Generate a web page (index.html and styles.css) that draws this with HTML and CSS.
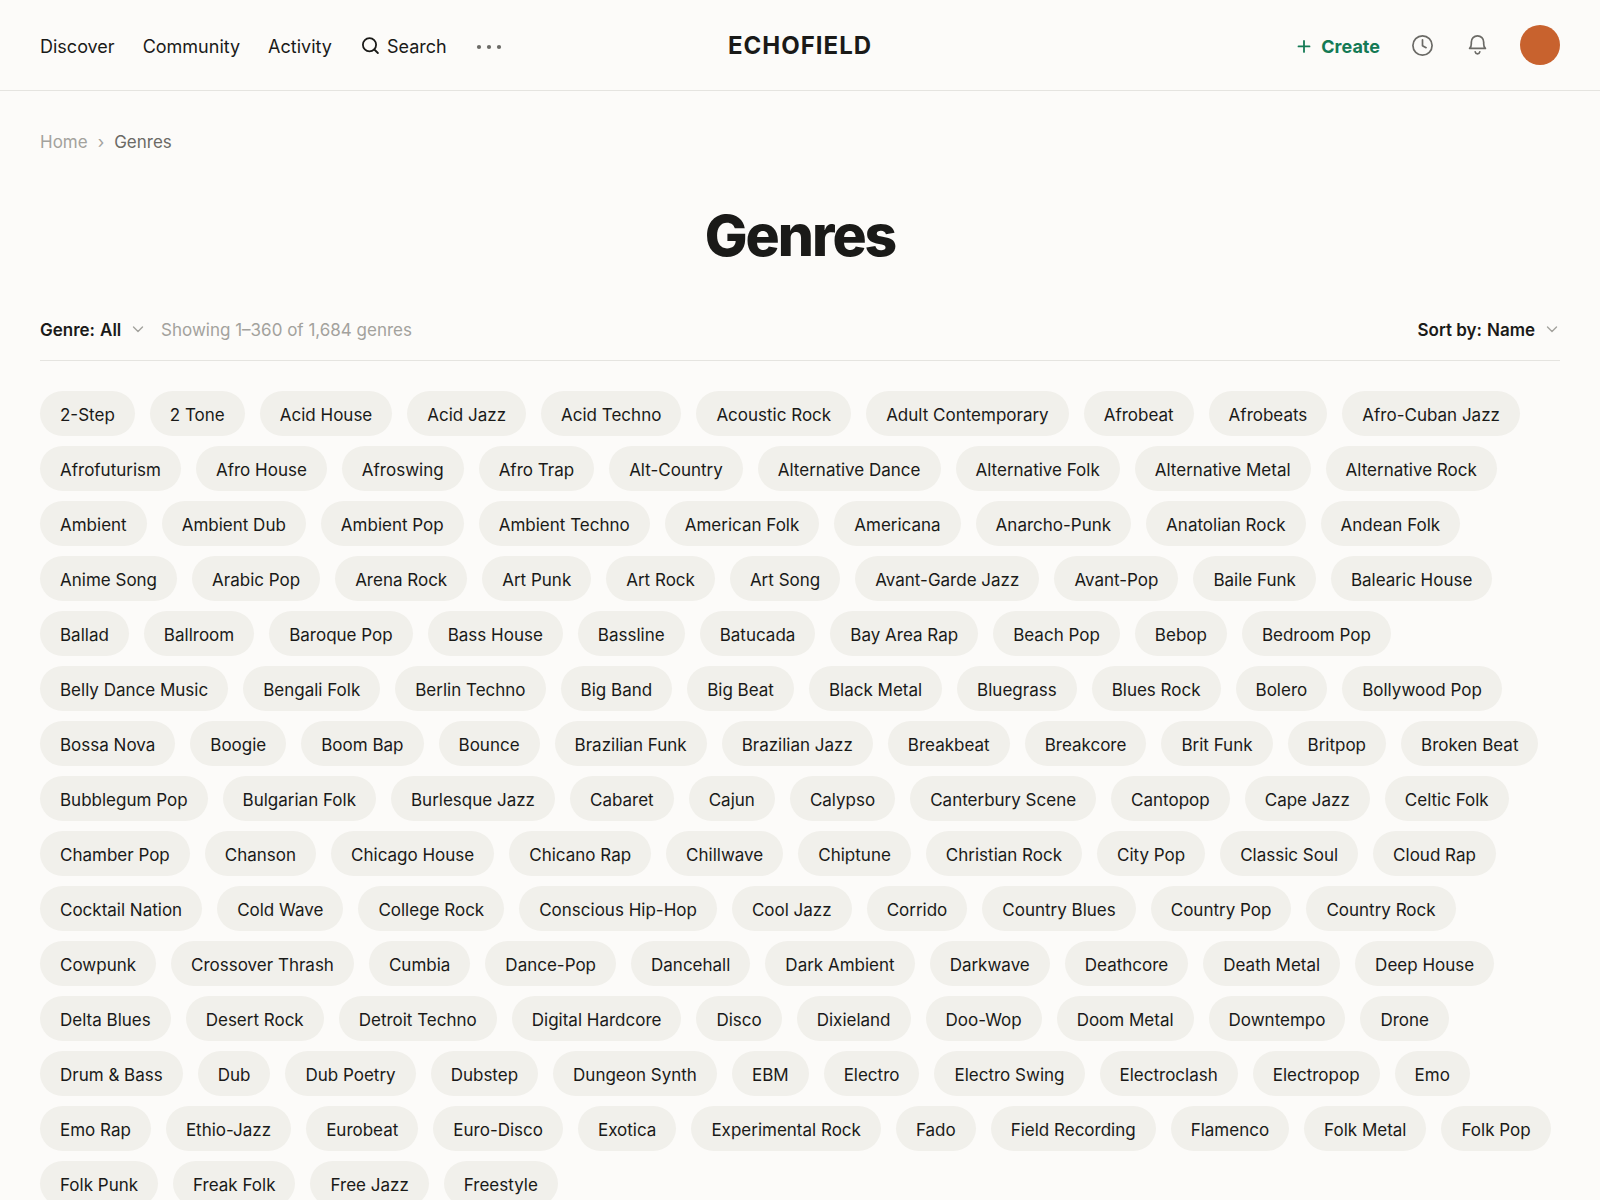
FILE: index.html
```html
<!DOCTYPE html>
<html lang="en">
<head>
    <meta charset="UTF-8">
    <meta name="viewport" content="width=device-width, initial-scale=1.0">
    <title>Genres - Echofield</title>
    <link rel="stylesheet" href="styles.css">
</head>
<body>
    <header class="header">
        <nav class="nav">
            <a href="#">Discover</a>
            <a href="#">Community</a>
            <a href="#">Activity</a>
            <button class="search">
                <svg width="20" height="20" viewBox="0 0 20 20" fill="none" stroke="currentColor" stroke-width="1.8" stroke-linecap="round">
                    <circle cx="9.5" cy="7.7" r="6.6"/>
                    <path d="M14.3 12.5l3.6 3.5"/>
                </svg>
                Search
            </button>
            <button class="more" aria-label="More">
                <svg width="28" height="6" viewBox="0 0 28 6" fill="currentColor">
                    <circle cx="4" cy="3" r="2.1"/>
                    <circle cx="14" cy="3" r="2.1"/>
                    <circle cx="24" cy="3" r="2.1"/>
                </svg>
            </button>
        </nav>
        <a class="logo" href="#">ECHOFIELD</a>
        <div class="actions">
            <button class="create">
                <svg width="14" height="14" viewBox="0 0 14 14" fill="none" stroke="currentColor" stroke-width="1.8" stroke-linecap="round">
                    <path d="M7 0.9v11M1.5 6.4h11"/>
                </svg>
                Create
            </button>
            <button class="icon" aria-label="History">
                <svg width="25" height="25" viewBox="0 0 25 25" fill="none" stroke="currentColor" stroke-width="1.7" stroke-linecap="round" stroke-linejoin="round">
                    <circle cx="12.5" cy="12.5" r="9.6"/>
                    <path d="M12.5 6.8v5.9l3.6 2"/>
                </svg>
            </button>
            <button class="icon" aria-label="Notifications">
                <svg width="25" height="25" viewBox="0 0 25 25" fill="none" stroke="currentColor" stroke-width="1.7" stroke-linecap="round" stroke-linejoin="round">
                    <path d="M4.6 15.4h15.8c-1.2-1.1-1.7-2.6-1.7-4.5V9.3c0-3.700-2.700-6.400-6.200-6.400s-6.200 2.700-6.200 6.400v1.600c0 1.900-.5 3.400-1.700 4.500z"/>
                    <path d="M10.2 18.9c.3 1.3 1.2 2 2.3 2s2-.7 2.3-2"/>
                </svg>
            </button>
            <button class="avatar" aria-label="Account"></button>
        </div>
    </header>

    <main class="content">
        <nav class="breadcrumb" aria-label="Breadcrumb">
            <a href="#">Home</a>
            <span class="separator">›</span>
            <span class="current">Genres</span>
        </nav>

        <h1>Genres</h1>

        <div class="toolbar">
            <div class="dropdown">
                <label for="genre">Genre:</label>
                <select id="genre">
                    <option>All</option>
                </select>
                <svg width="16" height="16" viewBox="0 0 16 16" fill="none" stroke="currentColor" stroke-width="1.4" stroke-linecap="round" stroke-linejoin="round">
                    <path d="M3.5 5L8 9.5L12.5 5"/>
                </svg>
            </div>
            <span class="count">Showing 1–360 of 1,684 genres</span>
            <div class="dropdown sort">
                <label for="sort">Sort by:</label>
                <select id="sort">
                    <option>Name</option>
                </select>
                <svg width="16" height="16" viewBox="0 0 16 16" fill="none" stroke="currentColor" stroke-width="1.4" stroke-linecap="round" stroke-linejoin="round">
                    <path d="M3.5 5L8 9.5L12.5 5"/>
                </svg>
            </div>
        </div>

        <div class="genres">
            <a href="#">2-Step</a>
            <a href="#">2 Tone</a>
            <a href="#">Acid House</a>
            <a href="#">Acid Jazz</a>
            <a href="#">Acid Techno</a>
            <a href="#">Acoustic Rock</a>
            <a href="#">Adult Contemporary</a>
            <a href="#">Afrobeat</a>
            <a href="#">Afrobeats</a>
            <a href="#">Afro-Cuban Jazz</a>
            <a href="#">Afrofuturism</a>
            <a href="#">Afro House</a>
            <a href="#">Afroswing</a>
            <a href="#">Afro Trap</a>
            <a href="#">Alt-Country</a>
            <a href="#">Alternative Dance</a>
            <a href="#">Alternative Folk</a>
            <a href="#">Alternative Metal</a>
            <a href="#">Alternative Rock</a>
            <a href="#">Ambient</a>
            <a href="#">Ambient Dub</a>
            <a href="#">Ambient Pop</a>
            <a href="#">Ambient Techno</a>
            <a href="#">American Folk</a>
            <a href="#">Americana</a>
            <a href="#">Anarcho-Punk</a>
            <a href="#">Anatolian Rock</a>
            <a href="#">Andean Folk</a>
            <a href="#">Anime Song</a>
            <a href="#">Arabic Pop</a>
            <a href="#">Arena Rock</a>
            <a href="#">Art Punk</a>
            <a href="#">Art Rock</a>
            <a href="#">Art Song</a>
            <a href="#">Avant-Garde Jazz</a>
            <a href="#">Avant-Pop</a>
            <a href="#">Baile Funk</a>
            <a href="#">Balearic House</a>
            <a href="#">Ballad</a>
            <a href="#">Ballroom</a>
            <a href="#">Baroque Pop</a>
            <a href="#">Bass House</a>
            <a href="#">Bassline</a>
            <a href="#">Batucada</a>
            <a href="#">Bay Area Rap</a>
            <a href="#">Beach Pop</a>
            <a href="#">Bebop</a>
            <a href="#">Bedroom Pop</a>
            <a href="#">Belly Dance Music</a>
            <a href="#">Bengali Folk</a>
            <a href="#">Berlin Techno</a>
            <a href="#">Big Band</a>
            <a href="#">Big Beat</a>
            <a href="#">Black Metal</a>
            <a href="#">Bluegrass</a>
            <a href="#">Blues Rock</a>
            <a href="#">Bolero</a>
            <a href="#">Bollywood Pop</a>
            <a href="#">Bossa Nova</a>
            <a href="#">Boogie</a>
            <a href="#">Boom Bap</a>
            <a href="#">Bounce</a>
            <a href="#">Brazilian Funk</a>
            <a href="#">Brazilian Jazz</a>
            <a href="#">Breakbeat</a>
            <a href="#">Breakcore</a>
            <a href="#">Brit Funk</a>
            <a href="#">Britpop</a>
            <a href="#">Broken Beat</a>
            <a href="#">Bubblegum Pop</a>
            <a href="#">Bulgarian Folk</a>
            <a href="#">Burlesque Jazz</a>
            <a href="#">Cabaret</a>
            <a href="#">Cajun</a>
            <a href="#">Calypso</a>
            <a href="#">Canterbury Scene</a>
            <a href="#">Cantopop</a>
            <a href="#">Cape Jazz</a>
            <a href="#">Celtic Folk</a>
            <a href="#">Chamber Pop</a>
            <a href="#">Chanson</a>
            <a href="#">Chicago House</a>
            <a href="#">Chicano Rap</a>
            <a href="#">Chillwave</a>
            <a href="#">Chiptune</a>
            <a href="#">Christian Rock</a>
            <a href="#">City Pop</a>
            <a href="#">Classic Soul</a>
            <a href="#">Cloud Rap</a>
            <a href="#">Cocktail Nation</a>
            <a href="#">Cold Wave</a>
            <a href="#">College Rock</a>
            <a href="#">Conscious Hip-Hop</a>
            <a href="#">Cool Jazz</a>
            <a href="#">Corrido</a>
            <a href="#">Country Blues</a>
            <a href="#">Country Pop</a>
            <a href="#">Country Rock</a>
            <a href="#">Cowpunk</a>
            <a href="#">Crossover Thrash</a>
            <a href="#">Cumbia</a>
            <a href="#">Dance-Pop</a>
            <a href="#">Dancehall</a>
            <a href="#">Dark Ambient</a>
            <a href="#">Darkwave</a>
            <a href="#">Deathcore</a>
            <a href="#">Death Metal</a>
            <a href="#">Deep House</a>
            <a href="#">Delta Blues</a>
            <a href="#">Desert Rock</a>
            <a href="#">Detroit Techno</a>
            <a href="#">Digital Hardcore</a>
            <a href="#">Disco</a>
            <a href="#">Dixieland</a>
            <a href="#">Doo-Wop</a>
            <a href="#">Doom Metal</a>
            <a href="#">Downtempo</a>
            <a href="#">Drone</a>
            <a href="#">Drum &amp; Bass</a>
            <a href="#">Dub</a>
            <a href="#">Dub Poetry</a>
            <a href="#">Dubstep</a>
            <a href="#">Dungeon Synth</a>
            <a href="#">EBM</a>
            <a href="#">Electro</a>
            <a href="#">Electro Swing</a>
            <a href="#">Electroclash</a>
            <a href="#">Electropop</a>
            <a href="#">Emo</a>
            <a href="#">Emo Rap</a>
            <a href="#">Ethio-Jazz</a>
            <a href="#">Eurobeat</a>
            <a href="#">Euro-Disco</a>
            <a href="#">Exotica</a>
            <a href="#">Experimental Rock</a>
            <a href="#">Fado</a>
            <a href="#">Field Recording</a>
            <a href="#">Flamenco</a>
            <a href="#">Folk Metal</a>
            <a href="#">Folk Pop</a>
            <a href="#">Folk Punk</a>
            <a href="#">Freak Folk</a>
            <a href="#">Free Jazz</a>
            <a href="#">Freestyle</a>
        </div>
    </main>
</body>
</html>
```

FILE: styles.css
```css
* {
    box-sizing: border-box;
}
body {
    margin: 0;
    font-family: Inter, sans-serif;
    font-size: 17px;
    line-height: 24px;
    color: #1a1a18;
    background-color: #fcfbf9;
}
a {
    color: inherit;
    text-decoration: none;
}
button, select {
    padding: 0;
    border: none;
    background: none;
    font: inherit;
    color: inherit;
    cursor: pointer;
}
svg {
    display: block;
}

.header {
    display: grid;
    grid-template-columns: 1fr auto 1fr;
    align-items: center;
    height: 91px;
    padding: 0 40px;
    border-bottom: 1px solid #e5e4e0;
    font-size: 18px;
}
.nav {
    display: flex;
    align-items: center;
    gap: 28px;
    padding-top: 4px;
}
.search {
    display: flex;
    align-items: center;
    gap: 7px;
}
.more {
    color: #6b6a66;
}
.logo {
    padding-top: 2px;
    font-size: 24px;
    font-weight: 700;
    letter-spacing: 1px;
}
.actions {
    display: flex;
    align-items: center;
    justify-content: flex-end;
    gap: 30px;
}
.create {
    display: flex;
    align-items: center;
    gap: 10px;
    padding-top: 4px;
    font-weight: 700;
    color: #147a55;
}
.icon {
    color: #6b6a66;
}
.avatar {
    width: 40px;
    height: 40px;
    border-radius: 50%;
    background-color: #c8622e;
}

.content {
    padding: 40px;
}
.breadcrumb {
    display: flex;
    gap: 10px;
    line-height: 22px;
    color: #a3a29d;
}
.current {
    color: #6b6a66;
}
h1 {
    margin: 50px 0;
    font-size: 57px;
    line-height: 65px;
    font-weight: 800;
    letter-spacing: -2px;
    text-align: center;
}

.toolbar {
    display: flex;
    align-items: center;
    gap: 15px;
    padding-bottom: 18px;
    border-bottom: 1px solid #e5e4e0;
}
.dropdown {
    display: flex;
    align-items: center;
    gap: 5px;
    font-weight: 600;
}
.dropdown select {
    appearance: none;
}
.dropdown svg {
    margin-left: 3px;
    color: #a3a29d;
}
.count {
    color: #a3a29d;
}
.sort {
    margin-left: auto;
}

.genres {
    display: flex;
    flex-wrap: wrap;
    gap: 10px 15px;
    padding-top: 30px;
}
.genres a {
    padding: 12px 20px 9px;
    border-radius: 23px;
    background-color: #f1f0eb;
}
```
